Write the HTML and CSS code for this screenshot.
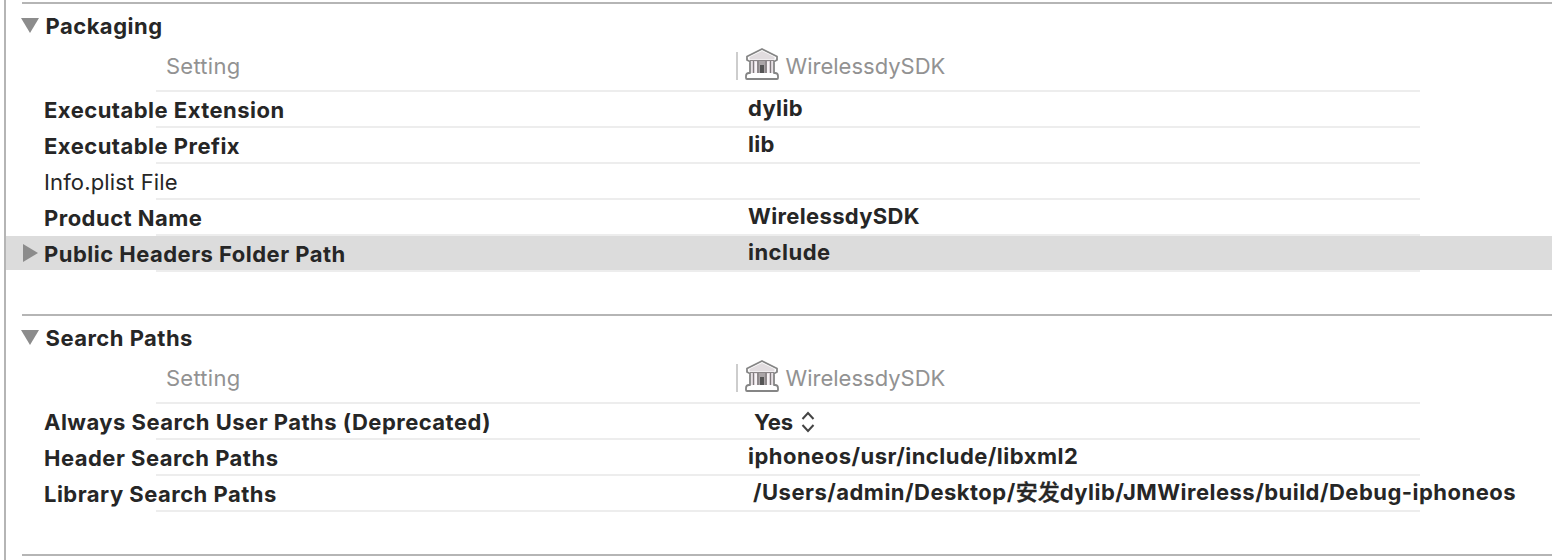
FILE: index.html
```html
<!DOCTYPE html>
<html lang="en">
<head>
<meta charset="utf-8">
<title>Build Settings</title>
<link rel="stylesheet" href="styles.css">
</head>
<body>
<svg class="defs" width="0" height="0" aria-hidden="true">
  <symbol id="library" viewBox="0 0 34 34">
    <path d="M17 2 2 9.500V13l3 1.500V26H4c-2 0-3 1-3 3v2q0 1 1 1h30q1 0 1-1v-2c0-2-1-3-3-3h-1V14.500l3-1.500V9.500z" fill="#fff" stroke="#858585" stroke-width="1.800" stroke-linejoin="round"/>
    <path d="M17 4 4.500 10v2.500h25V10z" fill="#e1dcdf"/>
    <path d="M6 14h22v12H6z" fill="#e8e1e5"/>
    <path d="M12 14h10v12H12z" fill="#aaa5a7"/>
    <path d="M15 18h4v8h-4z" fill="#555"/>
    <path d="M8.500 14v12M13 14v12M21 14v12M25.500 14v12" stroke="#817b7e" stroke-width="1.300"/>
    <path d="M11 15v11M23 15v11" stroke="#f8f4f6" stroke-width="2"/>
    <path d="M5 13.500h24" stroke="#8c8789"/>
  </symbol>
</svg>
<main class="panel">
  <section class="group">
    <h2 class="title"><svg class="arrow" width="18" height="15"><path d="M0 0h18L9 15z"/></svg><span>Packaging</span></h2>
    <div class="columns"><span class="setting">Setting</span><div class="target"><svg class="icon"><use href="#library"/></svg><span class="name">WirelessdySDK</span></div></div>
    <div class="row"><span class="label">Executable Extension</span><span class="value short">dylib</span></div>
    <div class="row"><span class="label">Executable Prefix</span><span class="value short">lib</span></div>
    <div class="row"><span class="label plain">Info.plist File</span></div>
    <div class="row"><span class="label">Product Name</span><span class="value short">WirelessdySDK</span></div>
    <div class="row selected"><svg class="disclosure" width="15" height="18"><path d="M0 0v18l15-9z"/></svg><span class="label">Public Headers Folder Path</span><span class="value">include</span></div>
  </section>
  <section class="group">
    <h2 class="title"><svg class="arrow" width="18" height="15"><path d="M0 0h18L9 15z"/></svg><span>Search Paths</span></h2>
    <div class="columns"><span class="setting">Setting</span><div class="target"><svg class="icon"><use href="#library"/></svg><span class="name">WirelessdySDK</span></div></div>
    <div class="row"><span class="label">Always Search User Paths (Deprecated)</span><span class="value popup"><span>Yes</span><svg class="stepper" width="14" height="22"><path d="m1.500 8 5.500-6 5.500 6m-11 6 5.500 6 5.500-6"/></svg></span></div>
    <div class="row"><span class="label">Header Search Paths</span><span class="value">iphoneos/usr/include/libxml2</span></div>
    <div class="row"><span class="label">Library Search Paths</span><span class="value path">/Users/admin/Desktop/<span class="cjk">安发</span>dylib/JMWireless/build/Debug-iphoneos</span></div>
  </section>
  <div class="group next"></div>
</main>
</body>
</html>
```
FILE: styles.css
```css
* { box-sizing: border-box; }
body {
  margin: 0;
  background: #fff;
  color: #262626;
  font: 700 22px/34px Inter, "Noto Sans CJK SC", sans-serif;
  letter-spacing: 0.48px;
}
.defs { display: block; }
.panel {
  height: 560px;
  margin-left: 4px;
  padding-top: 2px;
  border-left: 2px solid #b5b5b5;
}
.group {
  height: 312px;
  background: linear-gradient(#b5b5b5, #b5b5b5) 16px 0 / 100% 2px no-repeat;
}
.group + .group { height: 240px; }
.group.next { height: 6px; }
.title {
  display: flex;
  align-items: flex-start;
  height: 42px;
  margin: 0;
  padding: 7px 0 0 15px;
  font: inherit;
}
.title span { margin-left: 6.5px; white-space: nowrap; }
.arrow { margin-top: 9px; fill: #8c8c8c; }
.columns {
  display: grid;
  grid-template-columns: 570px 1fr;
  height: 48px;
  padding-left: 160px;
  background: linear-gradient(#ededed, #ededed) 150px 100% / 1264px 2px no-repeat;
  color: #929292;
  font-weight: 400;
  letter-spacing: 0;
}
.setting { padding-top: 5px; letter-spacing: 0.25px; }
.target {
  display: flex;
  height: 28px;
  margin-top: 8px;
  border-left: 2px solid #cdcdcd;
  line-height: 28px;
}
.icon { flex: none; width: 34px; height: 34px; margin: -5px 0 0 7px; }
.name { margin-left: 6.5px; }
.row {
  display: grid;
  grid-template-columns: 38px 704px 1fr;
  height: 36px;
  background: linear-gradient(#ededed, #ededed) 150px 100% / 1264px 2px no-repeat;
  white-space: nowrap;
}
.selected {
  background: linear-gradient(#dcdcdc, #dcdcdc) 0 0 / 100% 34px no-repeat,
    linear-gradient(#ededed, #ededed) 150px 100% / 1264px 2px no-repeat;
}
.label { grid-column: 2; justify-self: start; padding-top: 1px; }
.value { grid-column: 3; justify-self: start; margin-top: -1px; }
.short { letter-spacing: 0.35px; }
.disclosure { grid-column: 1; margin: 8px 0 0 17px; fill: #8c8c8c; }
.plain { font-weight: 400; letter-spacing: 0.15px; }
.popup { display: flex; margin: 1px 0 0 6px; }
.popup span { letter-spacing: 0; }
.stepper { margin: 6px 0 0 8px; fill: none; stroke: #444; stroke-width: 2; }
.path { margin-left: 5px; }
.cjk { font-weight: 500; letter-spacing: 0; -webkit-text-stroke: 0.4px; }
```
